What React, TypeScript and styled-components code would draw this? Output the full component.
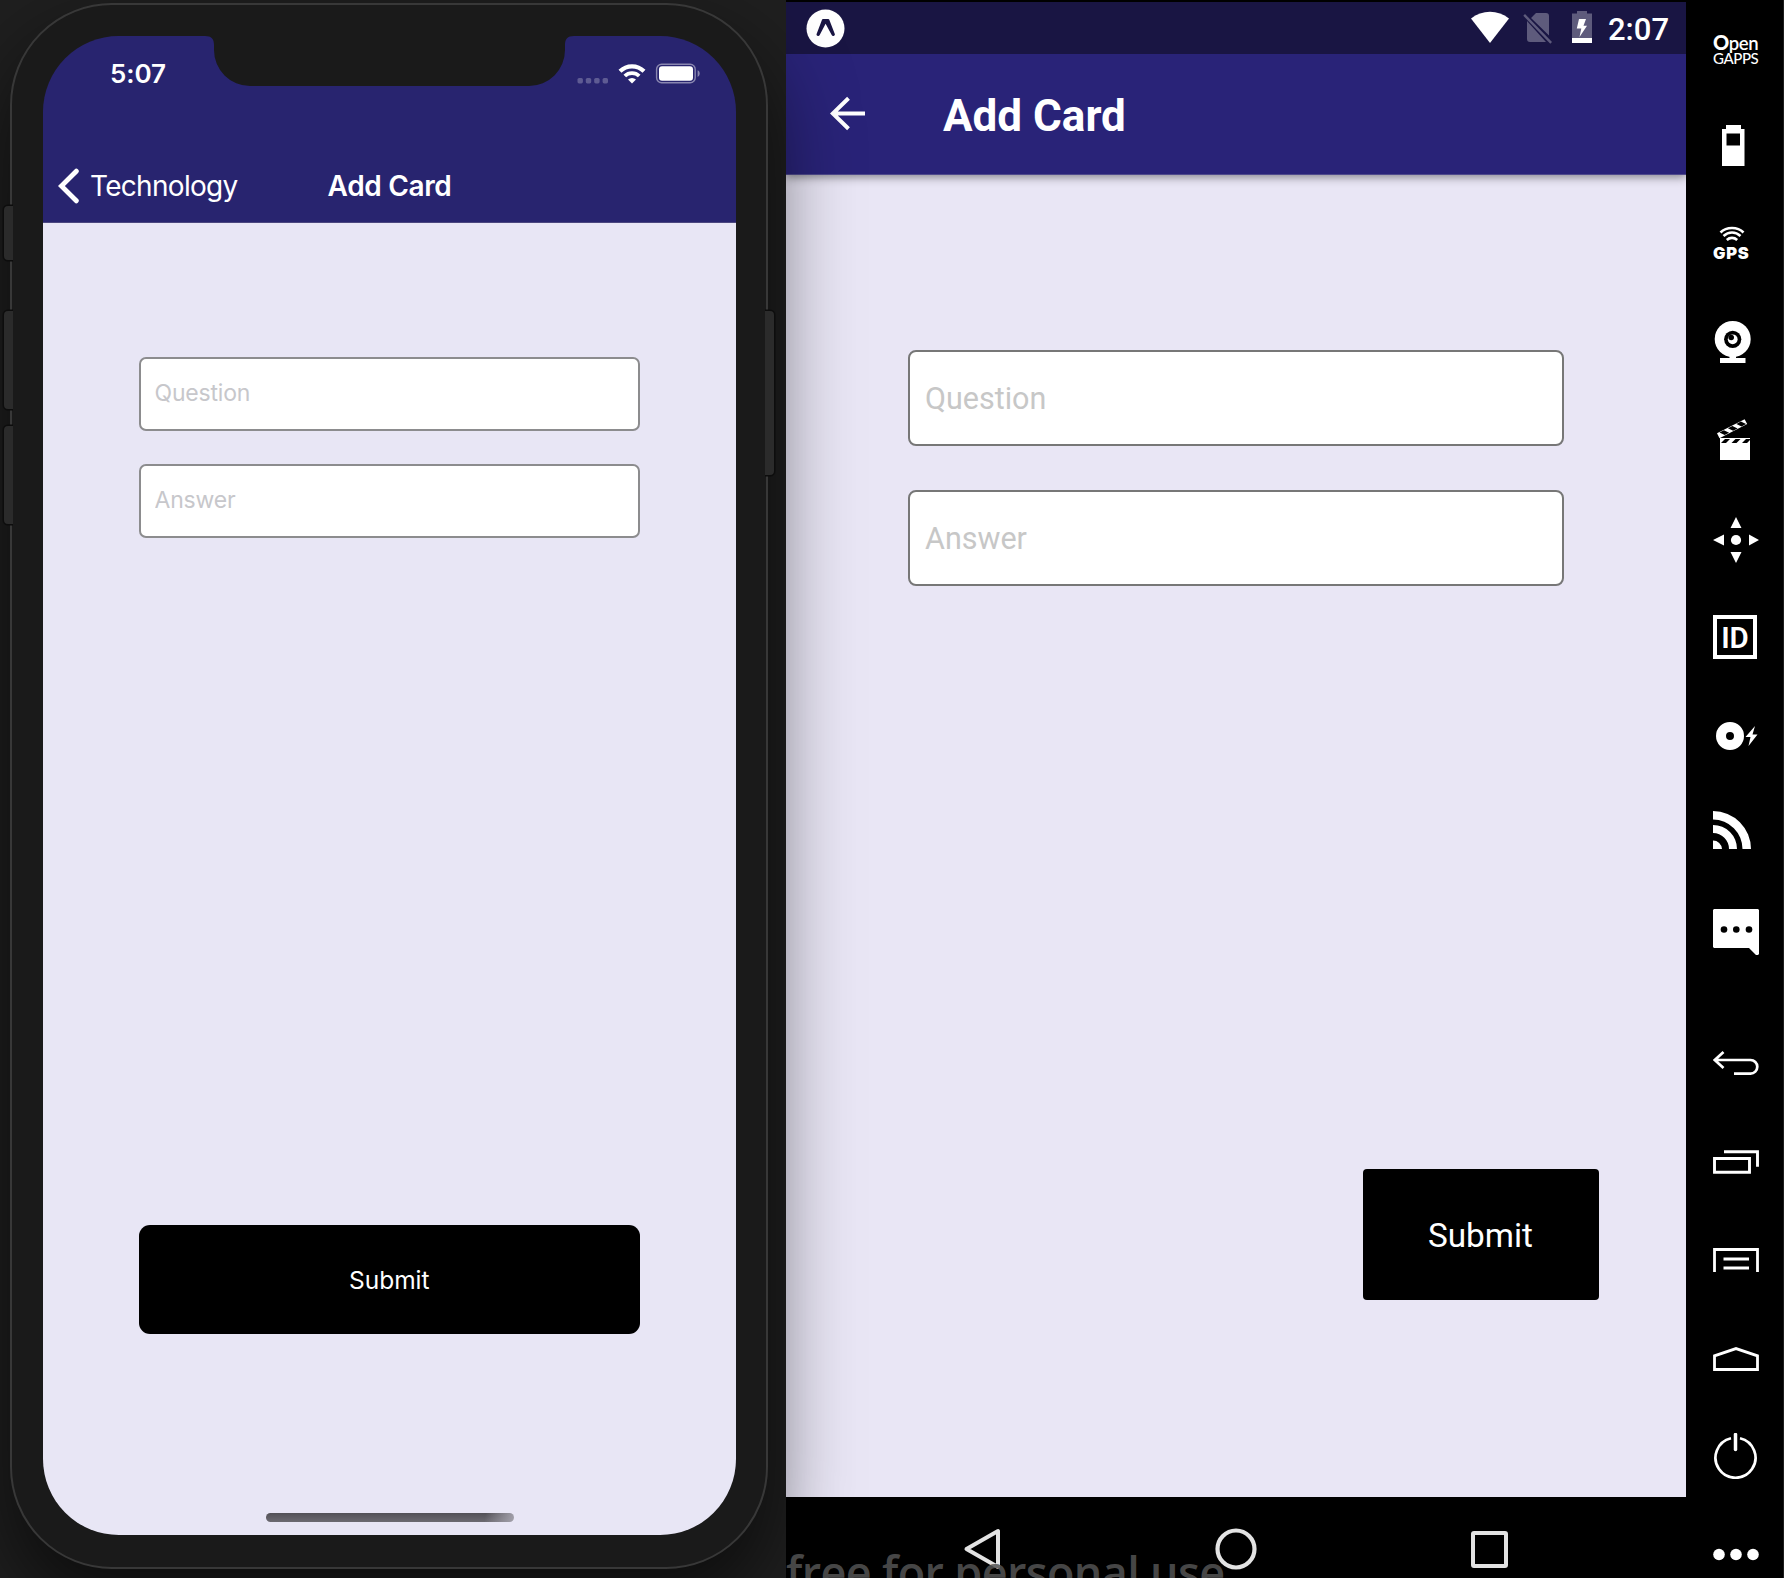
import React from "react";
import styled, { createGlobalStyle } from "styled-components";

const ios = `Inter, "Liberation Sans", sans-serif`;
const droid = `Roboto, "Liberation Sans", sans-serif`;

const GlobalStyle = createGlobalStyle`
  * { box-sizing: border-box; }
  body { margin: 0; background: #000; overflow: hidden; }
  svg { display: block; flex: none; }
`;

const Desktop = styled.main`
  display: flex;
  width: 1784px;
  height: 1578px;
  overflow: hidden;
  background: #000;
`;

/* ---------- iOS simulator ---------- */

const IosPane = styled.section`
  width: 786px;
  height: 1578px;
  flex: none;
  padding: 3px 0 0 10px;
  background: #1f1f1f;
`;

const Phone = styled.div`
  position: relative;
  z-index: 1;
  width: 758px;
  height: 1566px;
  padding: 31px;
  border: 2px solid #383838;
  border-radius: 102px;
  background: #1a1a1a;
  box-shadow: 0 36px 84px rgba(0, 0, 0, 0.62);
`;

const SideKey = styled.i<{ $side: "left" | "right"; $top: number; $height: number }>`
  position: absolute;
  top: ${(p) => p.$top}px;
  ${(p) => p.$side}: -8px;
  width: 9px;
  height: ${(p) => p.$height}px;
  border-radius: ${(p) => (p.$side === "left" ? "4px 0 0 4px" : "0 4px 4px 0")};
  background: #2b2b2b;
  box-shadow: 0 0 0 1.5px #0d0d0d;
  clip-path: inset(-2px ${(p) => (p.$side === "left" ? "0 -2px -2px" : "-2px -2px 0")});
`;

const IosScreen = styled.div`
  display: flex;
  flex-direction: column;
  position: relative;
  width: 693px;
  height: 1499px;
  border-radius: 76px;
  overflow: hidden;
  background: linear-gradient(#28246f 186px, #e8e6f5 186px);
  font-family: ${ios};
`;

const Notch = styled.svg`
  position: absolute;
  top: 0;
  left: 162px;
`;

const IosHeader = styled.header`
  height: 187px;
  flex: none;
  border-bottom: 1px solid #4b477f;
  color: #fff;
`;

const IosStatus = styled.div`
  display: flex;
  justify-content: space-between;
  height: 76px;
  padding: 0 36px 0 67px;
`;

const IosClock = styled.span`
  padding-top: 22px;
  font-size: 26px;
  line-height: 32px;
  font-weight: 600;
  letter-spacing: -0.1px;
`;

const IosNav = styled.nav`
  display: grid;
  grid-template-columns: 1fr auto 1fr;
  align-items: center;
  height: 74px;
  margin-top: 37px;
`;

const IosBack = styled.div`
  display: flex;
  align-items: center;
  gap: 11px;
  padding-left: 15px;
  font-size: 28px;
  letter-spacing: -0.7px;
`;

const IosTitle = styled.h1`
  margin: 0;
  font-size: 28px;
  font-weight: 600;
  letter-spacing: -0.35px;
`;

const IosForm = styled.form`
  display: flex;
  flex-direction: column;
  flex: 1;
  padding: 134px 96px 0 95.5px;
`;

const IosInput = styled.input`
  height: 73.5px;
  margin-bottom: 33.5px;
  padding: 0 14px 1px;
  border: 2px solid #8c8c8e;
  border-radius: 7px;
  background: #fff;
  font: 400 23px ${ios};
  letter-spacing: -0.2px;
  outline: none;
  &::placeholder { color: #c7c7cb; opacity: 1; }
`;

const IosSubmit = styled.button`
  height: 109px;
  margin-top: 654px;
  border: 0;
  border-radius: 11px;
  background: #000;
  color: #fff;
  font: 400 24.5px ${ios};
`;

const HomeBar = styled.div`
  width: 248px;
  height: 9px;
  margin: 0 auto 13px;
  border-radius: 5px;
  background:
    linear-gradient(100deg, transparent 88%, #a3a1ab 100%),
    linear-gradient(#525056, #6c6a71);
`;

/* ---------- Android emulator ---------- */

const DroidPane = styled.section`
  display: flex;
  flex-direction: column;
  width: 900px;
  height: 1578px;
  flex: none;
  padding-top: 2px;
  font-family: ${droid};
`;

const DroidStatus = styled.div`
  display: flex;
  align-items: center;
  height: 52px;
  padding: 0 17px 0 20px;
  background: #191543;
  color: #fff;
`;

const StatusIcons = styled.div`
  display: flex;
  margin-left: auto;
`;

const DroidClock = styled.span`
  margin-left: 15px;
  padding-top: 3px;
  font-size: 31px;
  line-height: 36px;
  font-weight: 500;
`;

const DroidHeader = styled.header`
  display: flex;
  align-items: center;
  gap: 77px;
  height: 120.5px;
  padding-left: 44px;
  background: #292378;
  color: #fff;
  border-bottom: 1px solid #4f4a8c;
  box-shadow: 0 2px 9px rgba(0, 0, 0, 0.45);
  clip-path: inset(0 0 -20px 0);
`;

const DroidTitle = styled.h1`
  margin: 0;
  padding-top: 4px;
  font-size: 44px;
  line-height: 50px;
  font-weight: 700;
`;

const DroidForm = styled.form`
  display: flex;
  flex-direction: column;
  height: 1322.5px;
  padding: 175px 122px 0;
  background: #e9e6f5;
`;

const DroidInput = styled.input`
  height: 96px;
  margin-bottom: 44px;
  padding: 1px 15px 0;
  border: 2px solid #777;
  border-radius: 8px;
  background: #fff;
  font: 400 30.5px ${droid};
  outline: none;
  &::placeholder { color: #c7c7c7; opacity: 1; }
`;

const DroidSubmit = styled.button`
  align-self: flex-end;
  width: 236px;
  height: 131.5px;
  margin: 539px -34.5px 0 0;
  padding-top: 4px;
  border: 0;
  border-radius: 4px;
  background: #000;
  color: #fff;
  font: 400 33.3px ${droid};
`;

const DroidNav = styled.nav`
  position: relative;
  z-index: 2;
  display: flex;
  justify-content: space-between;
  height: 81px;
  padding: 31px 177px 0 176px;
  overflow: hidden;
  background: #000;
`;

const Watermark = styled.span`
  position: absolute;
  left: 0;
  top: 45px;
  color: rgba(84, 84, 84, 0.86);
  font: 600 45px/60px "Open Sans", "Noto Sans", sans-serif;
  letter-spacing: -0.65px;
  white-space: nowrap;
`;

/* ---------- Emulator tool strip ---------- */

const Strip = styled.aside`
  display: flex;
  flex-direction: column;
  width: 98px;
  height: 1578px;
  flex: none;
  background: #000;
  border-right: 1px solid #1d1d1d;
  color: #fff;
`;

const Tool = styled.div<{ $gap: number; $left?: number }>`
  flex: none;
  margin-top: ${(p) => p.$gap}px;
  padding-left: ${(p) => p.$left ?? 27}px;
`;

const Gapps = styled.div`
  height: 34px;
  width: 60px;
  font-family: Lato, sans-serif;
  white-space: nowrap;
`;

const GappsTop = styled.div`
  font-size: 18.5px;
  line-height: 18px;
  font-weight: 600;
  letter-spacing: -0.4px;
  b { font-size: 20px; font-weight: 900; }
`;

const GappsBottom = styled.div`
  font-size: 15px;
  line-height: 13px;
  font-weight: 500;
  letter-spacing: -0.4px;
`;

const GpsLabel = styled.div`
  height: 18px;
  font: 900 16.5px/18px Inter, sans-serif;
  letter-spacing: 0.7px;
`;

const IdBox = styled.div`
  display: grid;
  place-items: center;
  width: 44px;
  height: 44px;
  padding-top: 2px;
  border: 4px solid #fff;
  font: 600 29.5px/32px Roboto, sans-serif;
`;

function IosSignal() {
  return (
    <svg width="123" height="76" viewBox="577 36 123 76">
      <g fill="#fff" opacity=".25">
        {[577.5, 585.8, 594.2, 602.6].map((x) => (
          <rect key={x} x={x} y="78" width="5.4" height="5.4" rx="1.6" />
        ))}
      </g>
      <g fill="none" stroke="#fff">
        <path d="M620 71.3a17 17 0 0 1 24 0" strokeWidth="4.2" />
        <path d="M624.8 76a10.3 10.3 0 0 1 14.4 0" strokeWidth="3.8" />
      </g>
      <path d="M628 79.6a6 6 0 0 1 8 0l-4 4z" fill="#fff" />
      <rect x="656.6" y="64.2" width="38.6" height="18.6" rx="5" fill="none" stroke="#fff" strokeOpacity=".45" strokeWidth="1.4" />
      <rect x="659" y="66.3" width="34" height="14.4" rx="3" fill="#fff" />
      <path d="M697.6 70.3c2.8 1.2 2.8 5.4 0 6.6z" fill="#fff" opacity=".45" />
    </svg>
  );
}

function IosSimulator() {
  return (
    <IosPane>
      <Phone>
        <SideKey $side="left" $top={201} $height={54} />
        <SideKey $side="left" $top={306} $height={98} />
        <SideKey $side="left" $top={421} $height={98} />
        <SideKey $side="right" $top={306} $height={164} />
        <IosScreen>
          <IosHeader>
            <IosStatus>
              <IosClock>5:07</IosClock>
              <IosSignal />
            </IosStatus>
            <IosNav>
              <IosBack>
                <svg width="21" height="36" viewBox="0 0 21 36">
                  <path d="M18.3 3.2 3.4 18l14.900 14.800" fill="none" stroke="#fff" strokeWidth="4.9" strokeLinecap="round" />
                </svg>
                Technology
              </IosBack>
              <IosTitle>Add Card</IosTitle>
            </IosNav>
          </IosHeader>
          <IosForm>
            <IosInput placeholder="Question" />
            <IosInput placeholder="Answer" />
            <IosSubmit type="button">Submit</IosSubmit>
          </IosForm>
          <HomeBar />
          <Notch width="369" height="50" viewBox="0 0 369 50">
            <path d="M0 0c6.500 0 9 3 9 9v5a36 36 0 0 0 36 36h279a36 36 0 0 0 36-36V9c0-6 2.500-9 9-9z" fill="#1a1a1a" />
          </Notch>
        </IosScreen>
      </Phone>
    </IosPane>
  );
}

function DroidStatusIcons() {
  return (
    <svg width="122" height="36" viewBox="1471 10 122 36">
      <path d="M1490 44 1471 19.500c11-9 27-9 38 0z" fill="#fff" />
      <g fill="#5e5b7c">
        <path d="m1536 14-5 5 18 17.500V17c0-2-1-3-3-3zM1527 22v18c0 2 1 3 3 3h16z" />
        <path d="m1525 15 27 28-1.700 1.700-27-28z" />
        <path d="M1577 12h10v2.500h5V44h-20V14.500h5z" />
      </g>
      <path d="M1572 39h20v5h-20zM1579 20h7l-2.500 6.800h3.500L1579.500 38l1.800-8.500h-4.500z" fill="#fff" />
    </svg>
  );
}

function AndroidEmulator() {
  return (
    <DroidPane>
      <DroidStatus>
        <svg width="39" height="39" viewBox="0 0 39 39">
          <circle cx="19.500" cy="19.500" r="19" fill="#fff" />
          <path
            d="M17 10h5.200c.6 0 .9.300 1.100.8l5.500 14.200c.3.900-.2 1.600-1.100 1.900-.9.200-1.600 0-2-.8L19.600 14.800 13.700 26.100c-.4.800-1.100 1-2 .8-.9-.3-1.400-1-1.100-1.900l5.400-14.200c.2-.5.500-.8 1-.8z"
            fill="#191543"
          />
        </svg>
        <StatusIcons>
          <DroidStatusIcons />
          <DroidClock>2:07</DroidClock>
        </StatusIcons>
      </DroidStatus>
      <DroidHeader>
        <svg width="36" height="36" viewBox="0 0 36 36">
          <path d="M18.500 2.200 2.800 17.500l15.700 15.300M3 17.500h32" fill="none" stroke="#fff" strokeWidth="4" />
        </svg>
        <DroidTitle>Add Card</DroidTitle>
      </DroidHeader>
      <DroidForm>
        <DroidInput placeholder="Question" />
        <DroidInput placeholder="Answer" />
        <DroidSubmit type="button">Submit</DroidSubmit>
      </DroidForm>
      <DroidNav>
        <svg width="42" height="42" viewBox="0 0 42 42">
          <path d="M36 3v36L4.500 21z" fill="none" stroke="#e3e3e3" strokeWidth="4" strokeLinejoin="round" />
        </svg>
        <svg width="42" height="42" viewBox="0 0 42 42">
          <circle cx="21" cy="21" r="18.500" fill="none" stroke="#e3e3e3" strokeWidth="4.200" />
        </svg>
        <svg width="42" height="42" viewBox="0 0 42 42">
          <rect x="6" y="5" width="33" height="33" rx="1" fill="none" stroke="#e3e3e3" strokeWidth="4" />
        </svg>
        <Watermark>free for personal use</Watermark>
      </DroidNav>
    </DroidPane>
  );
}

function ToolStrip() {
  return (
    <Strip>
      <Tool $gap={33}>
        <Gapps>
          <GappsTop><b>O</b>pen</GappsTop>
          <GappsBottom>GAPPS</GappsBottom>
        </Gapps>
      </Tool>
      <Tool $gap={58} $left={36}>
        <svg width="23" height="41" viewBox="0 0 23 41">
          <path fillRule="evenodd" fill="#fff" d="M4 0h15v4h3.500v37H0V4h4zM4.500 8.500v12H18v-12z" />
        </svg>
      </Tool>
      <Tool $gap={60}>
        <svg width="38" height="18" viewBox="0 0 38 18">
          <g fill="none" stroke="#fff" strokeWidth="2.600">
            <path d="M7.500 6.500c6-6 17-6 23 0M10.500 10c5-4.600 12-4.600 17 0M13.800 14c3-2.800 7.400-2.800 10.400 0" />
          </g>
        </svg>
        <GpsLabel>GPS</GpsLabel>
      </Tool>
      <Tool $gap={59} $left={28}>
        <svg width="38" height="42" viewBox="0 0 38 42">
          <circle cx="18.700" cy="18" r="18" fill="#fff" />
          <path d="M15.500 34h6.500v3h9.500v5H6v-5h9.500z" fill="#fff" />
          <circle cx="18.700" cy="18.300" r="8.600" fill="#000" />
          <circle cx="18.700" cy="18.300" r="4.900" fill="#fff" />
          <circle cx="17.200" cy="16.500" r="2.800" fill="#000" />
        </svg>
      </Tool>
      <Tool $gap={56} $left={31}>
        <svg width="33" height="41" viewBox="0 0 33 41">
          <g transform="translate(0 14.2) rotate(-27)">
            <path d="M0 0h31v5.600H0z" fill="#fff" />
            <path d="M2.500.5h5l3.500 4.600H6zM12 .5h5l3.500 4.600h-5zM21.500.5h5L30 5.100h-5z" fill="#000" />
          </g>
          <path d="M3 19h30v22H3z" fill="#fff" />
          <path d="m4 24 4-4h5l-4 4zM14.500 24l4-4h5l-4 4zM25 24l4-4h4v1l-3 3z" fill="#000" />
        </svg>
      </Tool>
      <Tool $gap={57}>
        <svg width="46" height="46" viewBox="0 0 46 46" fill="#fff">
          <circle cx="23" cy="23" r="5.100" />
          <path d="m23 0 5.500 11h-11zM23 46l5.500-11h-11zM0 23l11-5.500v11zM46 23l-10-5.500v11z" />
        </svg>
      </Tool>
      <Tool $gap={52}>
        <IdBox>ID</IdBox>
      </Tool>
      <Tool $gap={63} $left={29.5}>
        <svg width="42" height="28" viewBox="0 0 42 28">
          <path fillRule="evenodd" fill="#fff" d="M14 0a14 14 0 1 1 0 28 14 14 0 0 1 0-28m0 10a4 4 0 1 0 0 8 4 4 0 0 0 0-8" />
          <path d="m39 4-9.500 11h5L32.500 24 41.500 12.500h-5z" fill="#fff" />
        </svg>
      </Tool>
      <Tool $gap={61}>
        <svg width="38" height="38" viewBox="0 0 38 38" fill="#fff">
          <path d="M0 0a38 38 0 0 1 38 38h-8.500A29.500 29.500 0 0 0 0 8.500zM0 14a24 24 0 0 1 24 24h-8A16 16 0 0 0 0 22zM0 29.500A9 9 0 0 1 9 38H0z" />
        </svg>
      </Tool>
      <Tool $gap={60}>
        <svg width="46" height="46" viewBox="0 0 46 46">
          <path d="M1 0h44l1 1v44l-1 1h-2l-7-7H1l-1-1V1z" fill="#fff" />
          <circle cx="11" cy="20.500" r="3.300" />
          <circle cx="23.300" cy="20.500" r="3.300" />
          <circle cx="36" cy="20.500" r="3.300" />
        </svg>
      </Tool>
      <Tool $gap={96}>
        <svg width="46" height="24" viewBox="0 0 46 24">
          <path d="M10.500 1 1.800 9l8.700 8M2 9h35.500a6.800 6.800 0 0 1 0 13.600H21" fill="none" stroke="#fff" strokeWidth="2.700" />
        </svg>
      </Tool>
      <Tool $gap={75}>
        <svg width="46" height="24" viewBox="0 0 46 24">
          <path d="M11 1.700h33.500v15M1.500 8.500h35v13.700h-35z" fill="none" stroke="#fff" strokeWidth="2.900" />
        </svg>
      </Tool>
      <Tool $gap={74}>
        <svg width="46" height="24" viewBox="0 0 46 24">
          <path d="M1.500 24V1.500h43V24M10.500 11H36M10.500 20H36" fill="none" stroke="#fff" strokeWidth="2.800" />
        </svg>
      </Tool>
      <Tool $gap={75}>
        <svg width="46" height="24" viewBox="0 0 46 24">
          <path d="M1.500 22.500V8.800L23 1.600l21.500 7.200v13.700z" fill="none" stroke="#fff" strokeWidth="2.800" />
        </svg>
      </Tool>
      <Tool $gap={62} $left={28}>
        <svg width="43" height="46" viewBox="0 0 43 46">
          <path d="M17 5.300a20 20 0 1 0 9 0" fill="none" stroke="#fff" strokeWidth="2.700" />
          <path d="M21.500 1.500v15" stroke="#fff" strokeWidth="3.500" strokeLinecap="round" />
        </svg>
      </Tool>
      <Tool $gap={69}>
        <svg width="46" height="13" viewBox="0 0 46 13" fill="#fff">
          <circle cx="6" cy="6.500" r="5.800" />
          <circle cx="23" cy="6.500" r="5.800" />
          <circle cx="40" cy="6.500" r="5.800" />
        </svg>
      </Tool>
    </Strip>
  );
}

export default function App() {
  return (
    <>
      <GlobalStyle />
      <Desktop>
        <IosSimulator />
        <AndroidEmulator />
        <ToolStrip />
      </Desktop>
    </>
  );
}
